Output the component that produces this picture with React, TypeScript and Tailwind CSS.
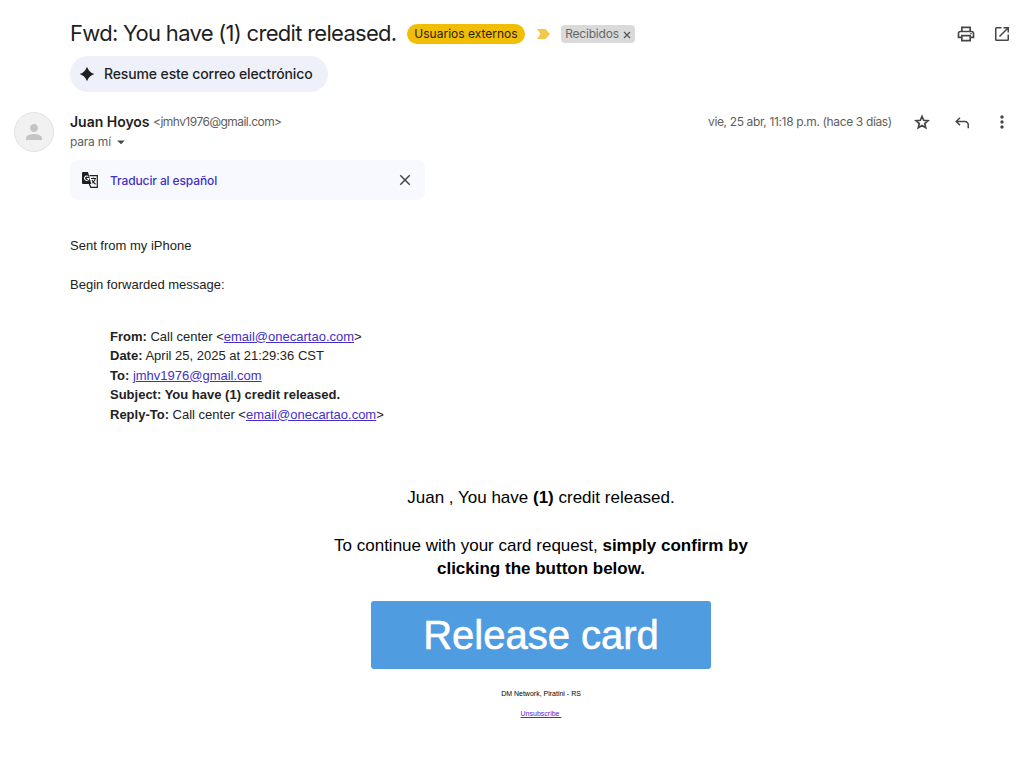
import React from "react";
import {
  MdArrowDropDown,
  MdClose,
  MdMoreVert,
  MdOutlinePrint,
  MdPerson,
} from "react-icons/md";

function Sparkle() {
  return (
    <svg viewBox="0 0 16 16" className="size-4" fill="#1f1f1f">
      <path d="M8 .7C9.300 4.500 11.500 6.700 15.300 8 11.500 9.300 9.300 11.500 8 15.300 6.700 11.500 4.500 9.300.7 8 4.500 6.700 6.700 4.500 8 .7Z" />
    </svg>
  );
}

function TranslateIcon() {
  return (
    <svg viewBox="0 0 18 18" className="size-[18px]" fill="none">
      <path d="M8.500 4.700h7.800v11.600H9.800L8.300 13" stroke="#1f1f1f" strokeWidth="1.200" />
      <path d="M2 1h5l3.300 12H2a1 1 0 0 1-1-1V2a1 1 0 0 1 1-1Z" fill="#1f1f1f" />
      <path d="M7.300 5.700A2.200 2.200 0 1 0 7.900 7.500H5.800" stroke="#fff" strokeWidth="1.100" />
      <path d="M10 7.500h5M12.500 6.500v1M14.300 7.600c-.5 2-1.600 3.400-3 4.500M11 9c.7 1.500 2 3 3.600 4.300" stroke="#1f1f1f" strokeWidth="1.100" />
    </svg>
  );
}

function Star() {
  return (
    <svg viewBox="0 0 24 24" className="size-[19px] translate-x-[0.5px]" fill="none" stroke="#444746" strokeWidth="2.100">
      <path d="M12 4.200l2.100 5 5.500.5-4.200 3.600 1.300 5.400-4.700-2.900-4.700 2.900 1.300-5.400-4.200-3.600 5.500-.5z" />
    </svg>
  );
}

function ImportanceMarker() {
  return (
    <svg viewBox="0 0 13 10" className="ml-3 h-[10px] w-[13px]" fill="#f2c84b">
      <path d="M0 0h8.500L13 5 8.500 10H0l3.600-5z" />
    </svg>
  );
}

function OpenInNew() {
  return (
    <svg viewBox="0 0 14 14" className="size-[14px]" fill="none" stroke="#444746" strokeWidth="1.500">
      <path d="M6.500.75H1.500a.75.75 0 0 0-.75.75v11c0 .4.35.75.75.75h11c.4 0 .75-.35.75-.75V7.500" />
      <path d="M8.500.75h4.750V5.500M13 1 4.500 9.500" />
    </svg>
  );
}

function ReplyArrow() {
  return (
    <svg viewBox="0 0 14 12" className="h-3 w-[14px]" fill="none" stroke="#444746" strokeWidth="1.500">
      <path d="M5 .7 1.200 4.500 5 8.300M1.400 4.500H10a3.250 3.250 0 0 1 3.250 3.250V11.300" />
    </svg>
  );
}

function Link({ children }: { children: React.ReactNode }) {
  return <a className="text-[#4230c8] underline">{children}</a>;
}

function SubjectBar() {
  return (
    <header className="flex h-6 items-center pr-[17px] pl-[70px]">
      <h1 className="w-[337px] -translate-y-px text-[22px] leading-6 tracking-[-0.71px] whitespace-nowrap text-[#1f1f1f]">
        Fwd: You have (1) credit released.
      </h1>
      <span className="flex h-5 w-[118px] items-center justify-center rounded-full bg-[#f2be05] text-[12px] whitespace-nowrap text-[#2b2100]">
        Usuarios externos
      </span>
      <ImportanceMarker />
      <span className="ml-[11px] flex h-[18px] w-[74px] items-center justify-center gap-1 rounded bg-[#dadada] text-[12px] tracking-[-0.2px] text-[#666]">
        Recibidos
        <svg viewBox="0 0 8 8" className="size-2 translate-y-px" stroke="#555" strokeWidth="1.300">
          <path d="M1 1l6 6M7 1 1 7" />
        </svg>
      </span>
      <div className="ml-auto flex items-center gap-[19px]">
        <MdOutlinePrint className="size-5 text-[#444746]" />
        <OpenInNew />
      </div>
    </header>
  );
}

function SenderRow() {
  return (
    <section className="mt-5 flex h-10 pl-[14px]">
      <div className="flex size-10 shrink-0 items-center justify-center rounded-full border border-[#e2e2e2] bg-[#f1f1f1]">
        <MdPerson className="size-6 text-[#c4c4c4]" />
      </div>
      <div className="ml-4 flex-1 whitespace-nowrap">
        <div className="flex h-5 items-center">
          <span className="w-[83px] text-[14px] leading-[18px] font-semibold tracking-[-0.02px] text-[#1f1f1f]">Juan Hoyos</span>
          <span className="text-[12px] tracking-[-0.53px] text-[#5e5e5e]">&lt;jmhv1976@gmail.com&gt;</span>
        </div>
        <div className="flex h-5 items-center text-[12px] text-[#5e5e5e]">
          <span className="w-[42px] tracking-[-0.2px]">para mí</span>
          <MdArrowDropDown className="size-[18px] text-[#444746]" />
        </div>
      </div>
      <div className="flex h-5 items-center pr-[14px]">
        <span className="w-[204px] text-[12px] tracking-[-0.36px] whitespace-nowrap text-[#5e5e5e]">
          vie, 25 abr, 11:18 p.m. (hace 3 días)
        </span>
        <Star />
        <span className="ml-6 translate-y-px">
          <ReplyArrow />
        </span>
        <MdMoreVert className="ml-[23px] size-5 text-[#444746]" />
      </div>
    </section>
  );
}

function TranslateBar() {
  return (
    <div className="mt-2 ml-[70px] flex h-10 w-[355px] items-center rounded-lg bg-[#f7f9fe] pr-[11px] pl-[11px]">
      <TranslateIcon />
      <span className="ml-[11px] translate-y-px text-[12px] font-medium tracking-[-0.12px] whitespace-nowrap text-[#4230c8]">
        Traducir al español
      </span>
      <MdClose className="ml-auto size-[18px] text-[#444746]" />
    </div>
  );
}

function ForwardedHeaders() {
  return (
    <div className="mt-8 pl-10 leading-[19.5px]">
      <p><b>From:</b> Call center &lt;<Link>email@onecartao.com</Link>&gt;</p>
      <p><b>Date:</b> April 25, 2025 at 21:29:36 CST</p>
      <p><b>To:</b> <Link>jmhv1976@gmail.com</Link></p>
      <p><b>Subject: You have (1) credit released.</b></p>
      <p><b>Reply-To:</b> Call center &lt;<Link>email@onecartao.com</Link>&gt;</p>
    </div>
  );
}

function Promotion() {
  return (
    <div className="ml-[110px] flex w-[862px] flex-col items-center pt-[62px] text-center text-black">
      <p className="text-[17px] leading-6">Juan , You have <b>(1)</b> credit released.</p>
      <p className="mt-6 w-[440px] text-[17px] leading-[23px]">
        To continue with your card request, <b>simply confirm by</b>
        <br />
        <b>clicking the button below.</b>
      </p>
      <a className="mt-[21px] flex h-[68px] w-[340px] items-center justify-center rounded-[3px] bg-[#4f9ce0] pb-px text-[40px] text-white [-webkit-text-stroke:0.6px_white]">
        Release card
      </a>
      <p className="mt-[19px] text-[7px] leading-[11px]">DM Network, Piratini - RS</p>
      <a className="mt-[9px] text-[7px] leading-[11px] whitespace-pre text-[#5a20e0] underline">{"Unsubscribe "}</a>
    </div>
  );
}

export default function App() {
  return (
    <main className="h-[781px] w-[1026px] overflow-hidden bg-white pt-[22px] font-['Inter',sans-serif]">
      <SubjectBar />
      <button className="mt-[10px] ml-[70px] flex h-9 w-[258px] items-center rounded-full bg-[#eef1fa] pl-[9px] text-[14px] font-medium tracking-[-0.13px] whitespace-nowrap text-[#1f1f1f]">
        <Sparkle />
        <span className="ml-[9px] -translate-y-px">Resume este correo electrónico</span>
      </button>
      <SenderRow />
      <TranslateBar />
      <article className="pt-9 font-['Liberation_Sans',sans-serif] text-[13px] text-[#222]">
        <div className="pl-[70px] leading-[19.5px]">
          <p>Sent from my iPhone</p>
          <p className="mt-[19.5px]">Begin forwarded message:</p>
          <ForwardedHeaders />
        </div>
        <Promotion />
      </article>
    </main>
  );
}
